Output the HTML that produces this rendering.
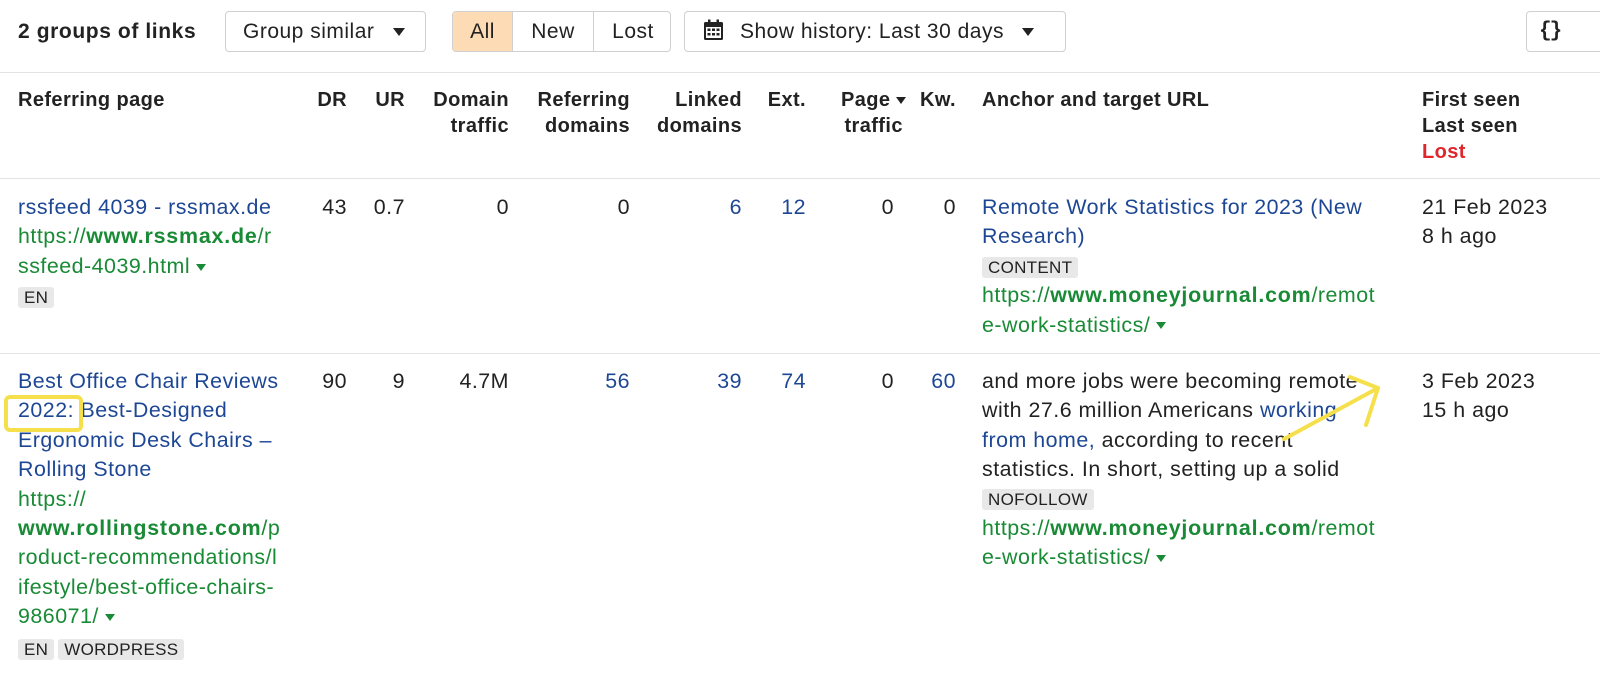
<!DOCTYPE html>
<html><head><meta charset="utf-8"><style>
*{margin:0;padding:0;box-sizing:border-box}
body{width:1600px;height:681px;overflow:hidden;background:#fff;font-family:"Liberation Sans",Arial,sans-serif;color:#222;position:relative;font-size:21px;letter-spacing:0.5px}
.a{position:absolute;white-space:nowrap}
.btn{position:absolute;top:11px;height:41px;border:1px solid #d0d0d0;border-radius:4px;background:#fff;font-size:21px;line-height:39px;color:#222;white-space:nowrap}
.h{position:absolute;font-weight:bold;font-size:20px;line-height:26px;top:87px;color:#222;white-space:nowrap;letter-spacing:0.4px}
.r{text-align:right}
.t{position:absolute;line-height:29.4px;font-size:21.4px;white-space:nowrap}
.blue{color:#1d4794}
.green{color:#198a35}
.green b{letter-spacing:0.8px}
.tag{display:inline-block;background:#e8e8e8;border-radius:3px;font-size:17px;line-height:21px;padding:0 6px;color:#222;margin-right:4px;vertical-align:middle;letter-spacing:0.3px}
.caret{display:inline-block;width:0;height:0;border-left:5px solid transparent;border-right:5px solid transparent;border-top:7px solid #198a35;margin-left:6px;vertical-align:middle}
.dc{display:inline-block;width:0;height:0;border-left:6px solid transparent;border-right:6px solid transparent;border-top:8px solid #222;vertical-align:middle}
.line{position:absolute;left:0;width:1600px;height:1px;background:#e3e3e3}
</style></head><body>
<div class="a" style="left:18px;top:19px;font-weight:bold;font-size:21px;line-height:26px;letter-spacing:0.6px">2 groups of links</div>
<div class="btn" style="left:225px;width:201px;padding-left:17px">Group similar <span class="dc" style="margin-left:12px"></span></div>
<div class="btn" style="left:452px;width:219px;overflow:hidden;padding:0">
 <span style="position:absolute;left:0;top:0;width:60px;height:39px;background:#fddcb5;text-align:center;border-right:1px solid #d0d0d0">All</span>
 <span style="position:absolute;left:60px;top:0;width:81px;height:39px;text-align:center;border-right:1px solid #d0d0d0">New</span>
 <span style="position:absolute;left:141px;top:0;width:78px;height:39px;text-align:center">Lost</span>
</div>
<div class="btn" style="left:684px;width:382px;padding-left:18px">
<svg width="21" height="22" viewBox="0 0 21 22" style="vertical-align:-3px;margin-right:16px"><rect x="1" y="3" width="19" height="18" rx="1.5" fill="#222"/><rect x="5" y="0.5" width="2.5" height="5" fill="#222"/><rect x="13.5" y="0.5" width="2.5" height="5" fill="#222"/><rect x="3" y="8" width="15" height="11" fill="#fff"/><g fill="#222"><rect x="4.5" y="9.5" width="3" height="2.5"/><rect x="9" y="9.5" width="3" height="2.5"/><rect x="13.5" y="9.5" width="3" height="2.5"/><rect x="4.5" y="14" width="3" height="2.5"/><rect x="9" y="14" width="3" height="2.5"/><rect x="13.5" y="14" width="3" height="2.5"/></g></svg>Show history: Last 30 days <span class="dc" style="margin-left:12px"></span></div>
<div class="btn" style="left:1526px;width:90px;padding-left:12px;font-weight:bold;font-family:'Liberation Mono',monospace;letter-spacing:-2px">{}</div>

<div class="line" style="top:72px"></div>
<div class="line" style="top:178px"></div>
<div class="line" style="top:353px"></div>

<div class="h" style="left:18px">Referring page</div>
<div class="h r" style="right:1253px">DR</div>
<div class="h r" style="right:1195px">UR</div>
<div class="h r" style="right:1091px">Domain<br>traffic</div>
<div class="h r" style="right:970px">Referring<br>domains</div>
<div class="h r" style="right:858px">Linked<br>domains</div>
<div class="h r" style="right:794px">Ext.</div>
<div class="h" style="left:841px;text-align:center">Page <span class="dc" style="border-left-width:5px;border-right-width:5px;border-top-width:7px"></span><br>traffic</div>
<div class="h r" style="right:644px">Kw.</div>
<div class="h" style="left:982px">Anchor and target URL</div>
<div class="h" style="left:1422px">First seen<br>Last seen<br><span style="color:#e0262b">Lost</span></div>

<!-- row 1 -->
<div class="t" style="left:18px;top:193px">
<div class="blue">rssfeed 4039 - rssmax.de</div>
<div class="green">https://<b>www.rssmax.de</b>/r<br>ssfeed-4039.html<span class="caret"></span></div>
<div style="margin-top:1px"><span class="tag">EN</span></div>
</div>
<div class="t r" style="right:1253px;top:193px">43</div>
<div class="t r" style="right:1195px;top:193px">0.7</div>
<div class="t r" style="right:1091px;top:193px">0</div>
<div class="t r" style="right:970px;top:193px">0</div>
<div class="t r blue" style="right:858px;top:193px">6</div>
<div class="t r blue" style="right:794px;top:193px">12</div>
<div class="t r" style="right:706px;top:193px">0</div>
<div class="t r" style="right:644px;top:193px">0</div>
<div class="t" style="left:982px;top:193px">
<div class="blue">Remote Work Statistics for 2023 (New<br>Research)</div>
<div><span class="tag">CONTENT</span></div>
<div class="green">https://<b>www.moneyjournal.com</b>/remot<br>e-work-statistics/<span class="caret"></span></div>
</div>
<div class="t" style="left:1422px;top:193px">21 Feb 2023<br>8 h ago</div>

<!-- row 2 -->
<div class="t" style="left:18px;top:367px">
<div class="blue">Best Office Chair Reviews<br>2022: Best-Designed<br>Ergonomic Desk Chairs –<br>Rolling Stone</div>
<div class="green">https://<br><b>www.rollingstone.com</b>/p<br>roduct-recommendations/l<br>ifestyle/best-office-chairs-<br>986071/<span class="caret"></span></div>
<div style="margin-top:2px"><span class="tag">EN</span><span class="tag">WORDPRESS</span></div>
</div>
<div style="position:absolute;left:4px;top:395px;width:79px;height:37px;border:4px solid #f5e04c;border-radius:6px"></div>
<div class="t r" style="right:1253px;top:367px">90</div>
<div class="t r" style="right:1195px;top:367px">9</div>
<div class="t r" style="right:1091px;top:367px">4.7M</div>
<div class="t r blue" style="right:970px;top:367px">56</div>
<div class="t r blue" style="right:858px;top:367px">39</div>
<div class="t r blue" style="right:794px;top:367px">74</div>
<div class="t r" style="right:706px;top:367px">0</div>
<div class="t r blue" style="right:644px;top:367px">60</div>
<div class="t" style="left:982px;top:367px">
<div>and more jobs were becoming remote<br>with 27.6 million Americans <span class="blue">working<br>from home,</span> according to recent<br>statistics. In short, setting up a solid</div>
<div><span class="tag">NOFOLLOW</span></div>
<div class="green">https://<b>www.moneyjournal.com</b>/remot<br>e-work-statistics/<span class="caret"></span></div>
</div>
<div class="t" style="left:1422px;top:367px">3 Feb 2023<br>15 h ago</div>
<svg style="position:absolute;left:0;top:0" width="1600" height="681"><g fill="none" stroke="#f5e04c" stroke-width="4" stroke-linecap="round" stroke-linejoin="round"><path d="M1284 439 L1378 388"/><path d="M1350 377 L1378 388 L1366 425"/></g></svg>
</body></html>
